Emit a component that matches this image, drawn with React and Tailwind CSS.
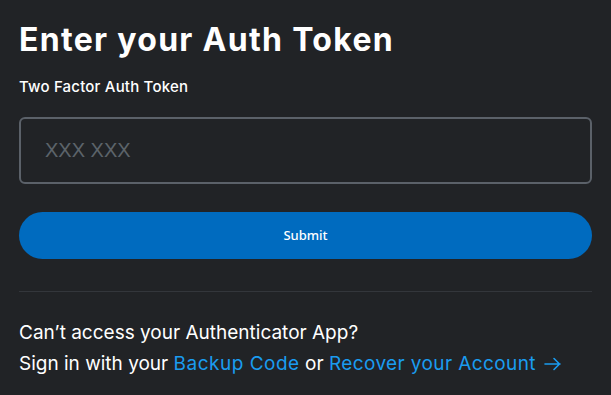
import { useState } from "react";

const App = () => {
  const [token, setToken] = useState("");

  return (
    <div className="min-h-screen w-full bg-[#212326] px-[19px] pt-[20px] font-['Inter',sans-serif]">
      <h1 className="text-[32px] font-bold leading-[40px] tracking-[1.3px] text-white">
        Enter your Auth Token
      </h1>

      <form onSubmit={(e) => e.preventDefault()} className="flex flex-col">
        <label htmlFor="token" className="mt-[19px] text-[15px] font-medium leading-[16px] tracking-[0.2px] text-white">
          Two Factor Auth Token
        </label>
        <input
          id="token"
          value={token}
          onChange={(e) => setToken(e.target.value)}
          placeholder="XXX XXX"
          className="mt-[22px] h-[67px] w-full rounded-[6px] border-2 border-[#5b6169] bg-transparent px-[24px] font-['Liberation_Sans',sans-serif] text-[20px] text-white outline-none placeholder:text-[#5c636a]"
        />
        <button
          type="submit"
          className="mt-[28px] h-[47px] w-full rounded-full bg-[#006bbf] font-['Noto_Sans',sans-serif] text-[13px] font-medium text-white"
        >
          Submit
        </button>
      </form>

      <div className="mt-[32px] h-px w-full bg-[#33363b]" />

      <div className="mt-[25px] text-[19px] leading-[31px] text-white">
        <p>Can’t access your Authenticator App?</p>
        <p>
          Sign in with your{" "}
          <a href="#" className="tracking-[0.5px] text-[#1a9cf0]">Backup Code</a> or{" "}
          <a href="#" className="inline-flex items-center gap-[8px] tracking-[0.4px] text-[#1a9cf0]">
            Recover your Account
            <svg width="18" height="14" viewBox="0 0 18 14" fill="none" stroke="currentColor" strokeWidth="1.6" strokeLinecap="round" strokeLinejoin="round">
              <path d="M1 7h15M10 1.5 15.5 7 10 12.5" />
            </svg>
          </a>
        </p>
      </div>
    </div>
  );
};

export default App;
